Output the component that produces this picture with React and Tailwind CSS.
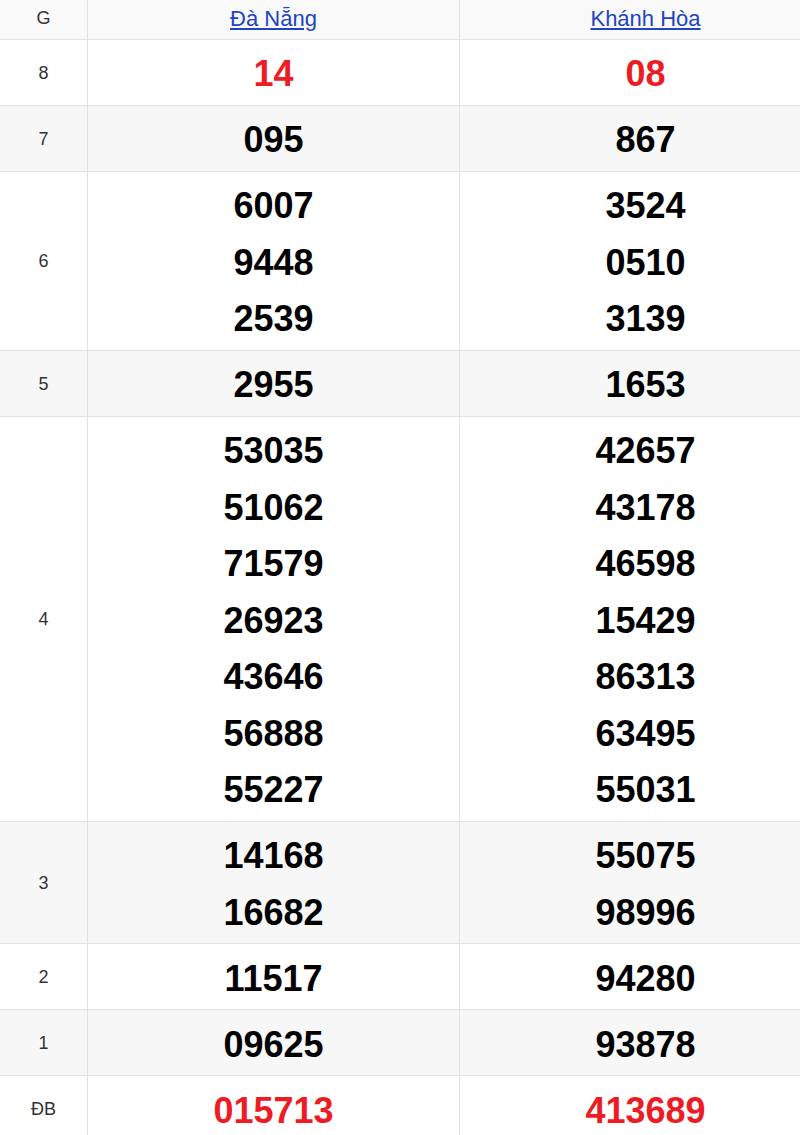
import React from "react";

const rows = [
  { g: "8", a: ["14"], b: ["08"], red: true },
  { g: "7", a: ["095"], b: ["867"] },
  { g: "6", a: ["6007", "9448", "2539"], b: ["3524", "0510", "3139"] },
  { g: "5", a: ["2955"], b: ["1653"] },
  {
    g: "4",
    a: ["53035", "51062", "71579", "26923", "43646", "56888", "55227"],
    b: ["42657", "43178", "46598", "15429", "86313", "63495", "55031"],
  },
  { g: "3", a: ["14168", "16682"], b: ["55075", "98996"] },
  { g: "2", a: ["11517"], b: ["94280"] },
  { g: "1", a: ["09625"], b: ["93878"] },
  { g: "ĐB", a: ["015713"], b: ["413689"], red: true },
];

const Cell = ({ nums, red }) => (
  <div className="flex flex-col items-center justify-center pt-[6.2px] pb-[2.3px] border-l border-[#e0e0e6]">
    {nums.map((n, i) => (
      <span
        key={i}
        className={`text-[36px] leading-[56.5px] font-bold ${red ? "text-[#ed1c24]" : "text-black"}`}
      >
        {n}
      </span>
    ))}
  </div>
);

export default function App() {
  return (
    <div className="w-[800px] overflow-hidden bg-white font-['Liberation_Sans',Arial,sans-serif]">
      <div className="w-[831px]">
        <div className="grid grid-cols-[87px_372px_372px] h-[40px] border-b border-[#e0e0e6] items-center bg-[#f9f9f9]">
          <div className="text-center text-[18px] text-[#333] pb-[3px]">G</div>
          <div className="h-full flex items-center justify-center border-l border-[#e0e0e6] pb-[3px]">
            <a href="#" className="text-[22px] text-[#2144c2] underline">Đà Nẵng</a>
          </div>
          <div className="h-full flex items-center justify-center border-l border-[#e0e0e6] pb-[3px]">
            <a href="#" className="text-[22px] text-[#2144c2] underline">Khánh Hòa</a>
          </div>
        </div>
        {rows.map((r, i) => (
          <div
            key={r.g}
            className={`grid grid-cols-[87px_372px_372px] border-b border-[#e0e0e6] ${i % 2 === 1 ? "bg-[#f7f7f7]" : "bg-white"}`}
          >
            <div className="flex items-center justify-center text-[18px] text-[#333] pt-[2px]">{r.g}</div>
            <Cell nums={r.a} red={r.red} />
            <Cell nums={r.b} red={r.red} />
          </div>
        ))}
      </div>
    </div>
  );
}
